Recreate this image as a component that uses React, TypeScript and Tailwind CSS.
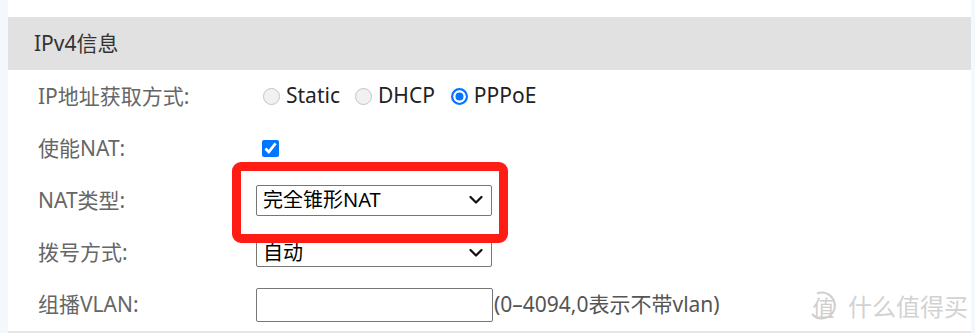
import { useState } from "react";

const font = { fontFamily: '"Noto Sans", "Noto Sans CJK SC", sans-serif' };
const cjk = { fontFamily: '"Noto Sans CJK SC", sans-serif' };

const Chevron = () => (
  <svg width="14" height="9" viewBox="0 0 14 9" className="pointer-events-none absolute right-[9px] top-1/2 -translate-y-1/2">
    <path d="M1.5 1.5 L7 7 L12.5 1.5" fill="none" stroke="#111" strokeWidth="2.2" strokeLinecap="round" strokeLinejoin="round" />
  </svg>
);

const Row = ({ label, children }: { label: string; children: React.ReactNode }) => (
  <div className="flex items-center h-[52.2px]">
    <div className="w-[248px] pl-[30px] text-[21px] text-[#666] leading-none whitespace-nowrap">{label}</div>
    <div className="flex items-center">{children}</div>
  </div>
);

const radioCls =
  "appearance-none w-[17px] h-[17px] m-0 mr-[6px] rounded-full border border-[#c4c4c4] bg-[#f1f1f1] checked:border-2 checked:border-[#0a74ff] checked:bg-[#0a74ff] checked:shadow-[inset_0_0_0_2.5px_#fff]";

export default function App() {
  const [mode, setMode] = useState("pppoe");
  const [nat, setNat] = useState(true);

  return (
    <div className="w-[975px] h-[333px] bg-[#f4f7fc] flex overflow-hidden" style={font}>
      <div className="ml-[8px] w-[963px] h-[333px] bg-white relative overflow-hidden">
        {/* 上一节的尾部，只露出一点 */}
        <div className="h-[17px] overflow-hidden">
          <div className="pl-[35px] -mt-[22px] leading-[20px] text-[21px] text-[#666]">基本信息</div>
        </div>

        <div className="h-[53px] bg-[#e1e1e1] flex items-center pl-[26px] text-[21px] text-[#333]">IPv4信息</div>

        <div className="border-b-2 border-[#e6e6e6]">
          <Row label="IP地址获取方式:">
            <label className="flex items-center ml-[7px] text-[21px] text-[#222]">
              <input type="radio" name="m" checked={mode === "static"} onChange={() => setMode("static")} className={radioCls} />
              Static
            </label>
            <label className="flex items-center ml-[15px] text-[21px] text-[#222]">
              <input type="radio" name="m" checked={mode === "dhcp"} onChange={() => setMode("dhcp")} className={radioCls} />
              DHCP
            </label>
            <label className="flex items-center ml-[16px] text-[21px] text-[#222]">
              <input type="radio" name="m" checked={mode === "pppoe"} onChange={() => setMode("pppoe")} className={radioCls} />
              PPPoE
            </label>
          </Row>
          <Row label="使能NAT:">
            <input type="checkbox" checked={nat} onChange={() => setNat(!nat)} className="w-[17px] h-[17px] m-0 ml-[6px]" />
          </Row>
          <Row label="NAT类型:">
            <div className="relative">
              <select className="appearance-none w-[236px] h-[31px] border border-[#767676] rounded-[2px] bg-white pl-[6px] text-[20px] text-black leading-none outline-none" defaultValue="full">
                <option value="full">完全锥形NAT</option>
                <option value="sym">对称NAT</option>
              </select>
              <Chevron />
            </div>
          </Row>
          <Row label="拨号方式:">
            <div className="relative">
              <select className="appearance-none w-[236px] h-[29px] border border-[#767676] rounded-[2px] bg-white pl-[6px] text-[20px] text-black leading-none outline-none" defaultValue="auto">
                <option value="auto">自动</option>
                <option value="manual">手动</option>
              </select>
              <Chevron />
            </div>
          </Row>
          <Row label="组播VLAN:">
            <input type="text" className="w-[237px] h-[34px] border border-[#767676] rounded-[2px] px-[6px] text-[20px] outline-none" />
            <span className="ml-[1px] text-[21px] text-[#555] whitespace-nowrap">(0–4094,0表示不带vlan)</span>
          </Row>
        </div>

        {/* 红色标注框 */}
        <div className="absolute left-[224px] top-[162px] w-[276px] h-[81px] border-[9px] border-[#fe1c14] rounded-[9px] pointer-events-none" />

        {/* 水印 */}
        <div className="absolute left-[800px] top-[290px] flex items-center pointer-events-none">
          <div className="relative w-[31px] h-[31px] flex items-center justify-center">
            <svg width="31" height="31" viewBox="0 0 31 31" className="absolute inset-0">
              <path d="M9 3.5 A13 13 0 1 1 4 24" fill="none" stroke="#cfcfcf" strokeWidth="2" />
            </svg>
            <span className="text-[22px] leading-none text-[#cfcfcf]" style={cjk}>值</span>
          </div>
          <span className="ml-[9px] text-[24px] leading-none text-[#d2d2d2]" style={cjk}>什么值得买</span>
        </div>
      </div>
    </div>
  );
}
